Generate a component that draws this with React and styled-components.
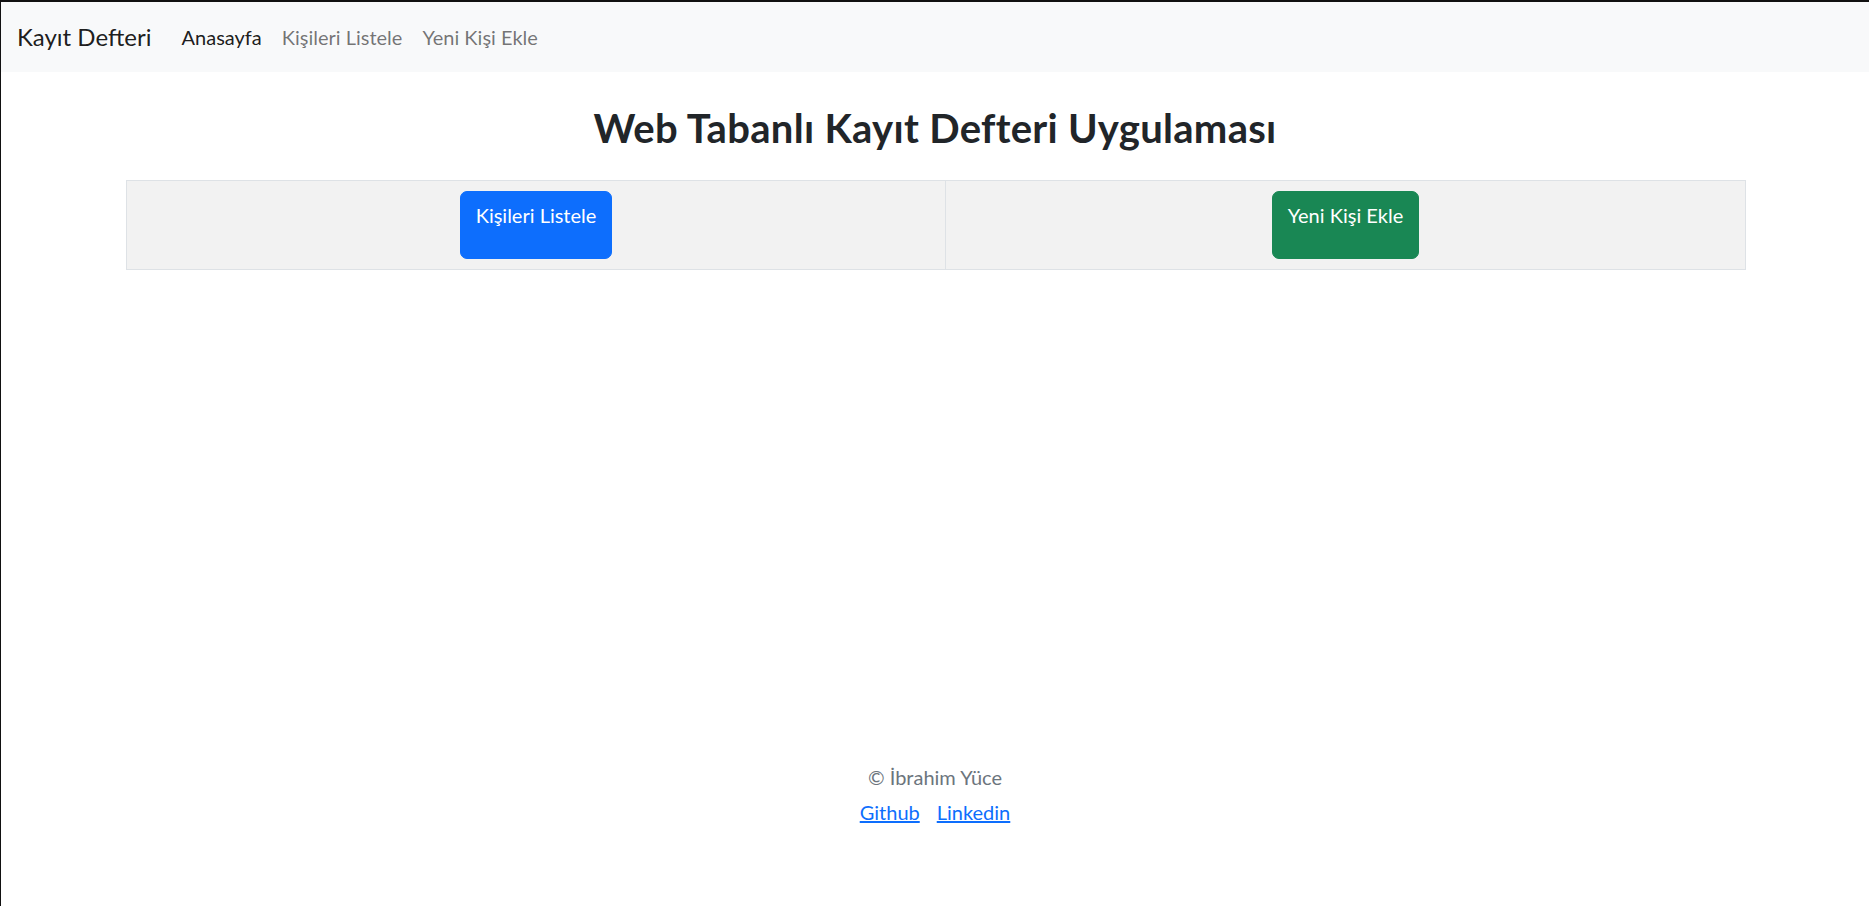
import React from "react";
import styled, { createGlobalStyle } from "styled-components";

const Global = createGlobalStyle`
  html, body { margin: 0; padding: 0; background: #fff; }
  body { font-family: "Lato", "Open Sans", sans-serif; color: #212529; }
  * { box-sizing: border-box; }
`;

const Frame = styled.div`
  min-height: 906px;
  border-top: 2px solid #111;
  border-left: 1px solid #111;
  display: flex;
  flex-direction: column;
`;

const Navbar = styled.nav`
  height: 70px;
  background: #f8f9fa;
  display: flex;
  align-items: center;
  padding-left: 16px;
`;

const Brand = styled.a`
  font-size: 24px;
  line-height: 30px;
  color: rgba(0, 0, 0, 0.9);
  text-decoration: none;
  margin-right: 20px;
`;

const NavList = styled.ul`
  display: flex;
  list-style: none;
  margin: 0;
  padding: 0;
`;

const NavLink = styled.a`
  display: block;
  padding: 10px;
  font-size: 20px;
  line-height: 30px;
  text-decoration: none;
  color: ${(p) => (p.$active ? "rgba(0,0,0,0.9)" : "rgba(0,0,0,0.55)")};
`;

const Main = styled.main`
  flex: 1;
  display: flex;
  flex-direction: column;
  align-items: center;
`;

const Title = styled.h2`
  margin: 32px 0 28px;
  font-size: 40px;
  line-height: 48px;
  font-weight: 700;
  letter-spacing: 0.3px;
  color: #212529;
  text-align: center;
`;

const Table = styled.div`
  width: 1620px;
  margin-left: 2px;
  display: grid;
  grid-template-columns: 819fr 801fr;
  border: 1px solid #dee2e6;
  background: #f2f2f2;
`;

const Cell = styled.div`
  padding: 10px;
  display: flex;
  justify-content: center;
  & + & {
    border-left: 1px solid #dee2e6;
  }
`;

const Button = styled.a`
  display: inline-block;
  height: 68px;
  padding: 8px 15px 0;
  border-radius: 7px;
  font-size: 20px;
  line-height: 30px;
  color: #fff;
  text-decoration: none;
  background: ${(p) => (p.$variant === "success" ? "#198754" : "#0d6efd")};
  border: 1px solid ${(p) => (p.$variant === "success" ? "#198754" : "#0d6efd")};
`;

const Footer = styled.footer`
  padding-bottom: 79px;
  display: flex;
  flex-direction: column;
  align-items: center;
  font-size: 20px;
  line-height: 30px;
  color: #6c757d;
`;

const Links = styled.div`
  margin-top: 5px;
  display: flex;
  gap: 17px;
`;

const FooterLink = styled.a`
  color: #0d6efd;
  text-decoration: underline;
`;

export default function App() {
  return (
    <>
      <Global />
      <Frame>
        <Navbar>
          <Brand href="#">Kayıt Defteri</Brand>
          <NavList>
            <li><NavLink href="#" $active>Anasayfa</NavLink></li>
            <li><NavLink href="#">Kişileri Listele</NavLink></li>
            <li><NavLink href="#">Yeni Kişi Ekle</NavLink></li>
          </NavList>
        </Navbar>
        <Main>
          <Title>Web Tabanlı Kayıt Defteri Uygulaması</Title>
          <Table>
            <Cell>
              <Button href="#">Kişileri Listele</Button>
            </Cell>
            <Cell>
              <Button href="#" $variant="success">Yeni Kişi Ekle</Button>
            </Cell>
          </Table>
        </Main>
        <Footer>
          <div>© İbrahim Yüce</div>
          <Links>
            <FooterLink href="#">Github</FooterLink>
            <FooterLink href="#">Linkedin</FooterLink>
          </Links>
        </Footer>
      </Frame>
    </>
  );
}
